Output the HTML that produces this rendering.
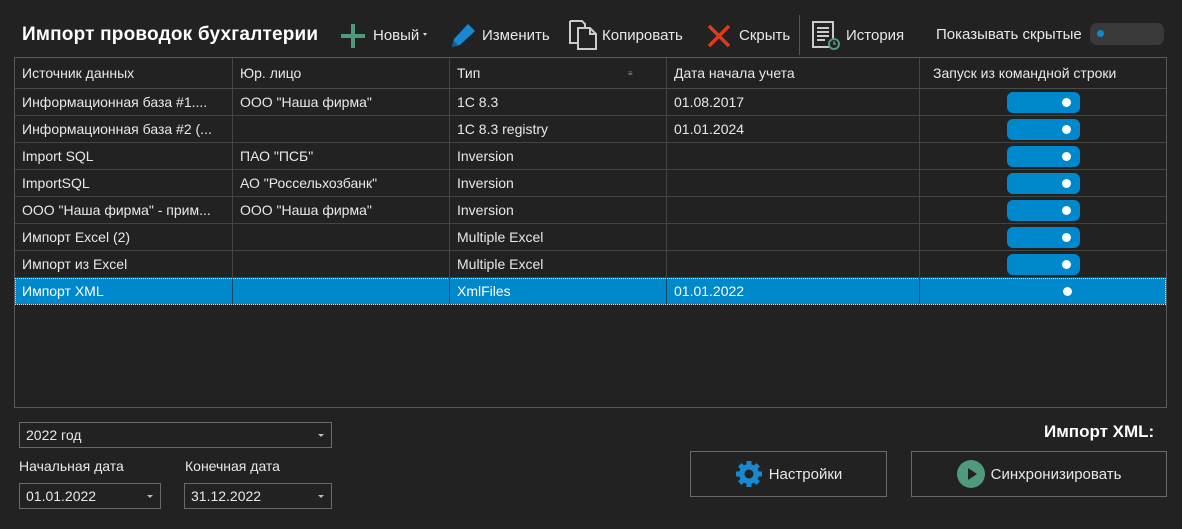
<!DOCTYPE html>
<html><head><meta charset="utf-8"><style>
*{margin:0;padding:0;box-sizing:border-box}
body{width:1182px;height:529px;background:#222;color:#e8e8e8;font-family:"Liberation Sans","DejaVu Sans",sans-serif;font-size:14px;position:relative;overflow:hidden}
.a{position:absolute;white-space:nowrap}
.grid{position:absolute;left:14px;top:57px;width:1153px;height:351px;border:1px solid #5a5a5a}
.row{position:absolute;left:0;width:1151px;height:27px;border-bottom:1px solid #444}
.c{position:absolute;top:0;height:100%;line-height:26px;padding-left:7px;border-right:1px solid #444;overflow:hidden}
.tg{position:absolute;left:992px;top:3px;width:73px;height:21px;border-radius:6px;background:#0088cc}
.tg:after{content:"";position:absolute;right:9px;top:6px;width:9px;height:9px;border-radius:50%;background:#fff}
.box{position:absolute;border:1px solid #6a6a6a;height:26px;line-height:24px;padding-left:6px}
.box:after{content:"";position:absolute;right:7px;top:11px;border:3px solid transparent;border-top:3px solid #bbb}
.btn{position:absolute;border:1px solid #6a6a6a;height:46px;top:451px;display:flex;align-items:center;justify-content:center;gap:6px;font-size:15px}
</style></head><body>
<div class="a" style="left:22px;top:24px;font-size:19px;font-weight:bold;color:#fff;letter-spacing:0.2px">Импорт проводок бухгалтерии</div>
<svg class="a" style="left:340px;top:23px" width="26" height="26"><path d="M13 1v24M1 13h24" stroke="#4f9a7c" stroke-width="4"/></svg>
<div class="a" style="left:373px;top:27px;font-size:15px">Новый</div>
<div class="a" style="left:423px;top:33px;border:2.5px solid transparent;border-top:3px solid #ddd"></div>
<svg class="a" style="left:449px;top:21px" width="28" height="28"><path d="M3 26l2-8L19 3l7 7L11 24z" fill="#1a88d0"/><path d="M3 26l2-6 4 4z" fill="#0d5f99"/></svg>
<div class="a" style="left:482px;top:27px;font-size:15px">Изменить</div>
<svg class="a" style="left:567px;top:19px" width="32" height="32"><path d="M3 2h12l3 3v4M3 2v22h8" fill="none" stroke="#ccc" stroke-width="2"/><path d="M11 9h12l6 6v15H11z M23 9v6h6" fill="none" stroke="#ccc" stroke-width="2"/></svg>
<div class="a" style="left:602px;top:27px;font-size:15px">Копировать</div>
<svg class="a" style="left:706px;top:23px" width="26" height="26"><path d="M3 3l20 20M23 3L3 23" stroke="#e03a1c" stroke-width="3.5"/></svg>
<div class="a" style="left:739px;top:27px;font-size:15px">Скрыть</div>
<div class="a" style="left:799px;top:15px;width:1px;height:40px;background:#555"></div>
<svg class="a" style="left:811px;top:20px" width="30" height="30"><rect x="2" y="2" width="20" height="25" fill="none" stroke="#ccc" stroke-width="2"/><path d="M6 8h12M6 12h12M6 16h12M6 20h8" stroke="#ccc" stroke-width="2"/><circle cx="23" cy="24" r="5" fill="#222" stroke="#4f9a7c" stroke-width="2"/><path d="M23 21v3h2" stroke="#4f9a7c" stroke-width="1.5" fill="none"/></svg>
<div class="a" style="left:846px;top:27px;font-size:15px">История</div>
<div class="a" style="left:936px;top:26px;font-size:15px">Показывать скрытые</div>
<div class="a" style="left:1090px;top:23px;width:74px;height:22px;border-radius:7px;background:#3a3a3a"></div>
<div class="a" style="left:1097px;top:30px;width:7px;height:7px;border-radius:50%;background:#0a88d0"></div>
<div class="grid">
<div class="row" style="top:0;height:31px;border-bottom:1px solid #4a4a4a">
<div class="c" style="left:0;width:218px;line-height:31px">Источник данных</div>
<div class="c" style="left:218px;width:217px;line-height:31px">Юр. лицо</div>
<div class="c" style="left:435px;width:217px;line-height:31px">Тип<span style="position:absolute;left:178px;font-size:8px;color:#999">≡</span></div>
<div class="c" style="left:652px;width:253px;line-height:31px">Дата начала учета</div>
<div class="c" style="left:905px;width:246px;border:0;line-height:31px;padding-left:13px">Запуск из командной строки</div></div>
<div class="row" style="top:31px"><div class="c" style="left:0;width:218px">Информационная база #1....</div><div class="c" style="left:218px;width:217px">ООО "Наша фирма"</div><div class="c" style="left:435px;width:217px">1С 8.3</div><div class="c" style="left:652px;width:253px">01.08.2017</div><div class="tg"></div></div>
<div class="row" style="top:58px"><div class="c" style="left:0;width:218px">Информационная база #2 (...</div><div class="c" style="left:218px;width:217px"></div><div class="c" style="left:435px;width:217px">1С 8.3 registry</div><div class="c" style="left:652px;width:253px">01.01.2024</div><div class="tg"></div></div>
<div class="row" style="top:85px"><div class="c" style="left:0;width:218px">Import SQL</div><div class="c" style="left:218px;width:217px">ПАО "ПСБ"</div><div class="c" style="left:435px;width:217px">Inversion</div><div class="c" style="left:652px;width:253px"></div><div class="tg"></div></div>
<div class="row" style="top:112px"><div class="c" style="left:0;width:218px">ImportSQL</div><div class="c" style="left:218px;width:217px">АО "Россельхозбанк"</div><div class="c" style="left:435px;width:217px">Inversion</div><div class="c" style="left:652px;width:253px"></div><div class="tg"></div></div>
<div class="row" style="top:139px"><div class="c" style="left:0;width:218px">ООО "Наша фирма" - прим...</div><div class="c" style="left:218px;width:217px">ООО "Наша фирма"</div><div class="c" style="left:435px;width:217px">Inversion</div><div class="c" style="left:652px;width:253px"></div><div class="tg"></div></div>
<div class="row" style="top:166px"><div class="c" style="left:0;width:218px">Импорт Excel (2)</div><div class="c" style="left:218px;width:217px"></div><div class="c" style="left:435px;width:217px">Multiple Excel</div><div class="c" style="left:652px;width:253px"></div><div class="tg"></div></div>
<div class="row" style="top:193px"><div class="c" style="left:0;width:218px">Импорт из Excel</div><div class="c" style="left:218px;width:217px"></div><div class="c" style="left:435px;width:217px">Multiple Excel</div><div class="c" style="left:652px;width:253px"></div><div class="tg"></div></div>
<div class="row" style="top:220px;background:#0088cc;outline:1px dotted #cde;outline-offset:-1px;color:#fff"><div class="c" style="left:0;width:218px;border-color:#1a4a66">Импорт XML</div><div class="c" style="left:218px;width:217px;border-color:#1a4a66"></div><div class="c" style="left:435px;width:217px;border-color:#1a4a66">XmlFiles</div><div class="c" style="left:652px;width:253px;border-color:#1a4a66">01.01.2022</div><div style="position:absolute;left:1048px;top:9px;width:9px;height:9px;border-radius:50%;background:#fff"></div></div>
</div>
<div class="box" style="left:19px;top:422px;width:313px">2022 год</div>
<div class="a" style="left:19px;top:458px">Начальная дата</div>
<div class="a" style="left:185px;top:458px">Конечная дата</div>
<div class="box" style="left:19px;top:483px;width:142px">01.01.2022</div>
<div class="box" style="left:184px;top:483px;width:148px">31.12.2022</div>
<div class="a" style="left:1044px;top:422px;font-size:17px;font-weight:bold;color:#fff">Импорт XML:</div>
<div class="btn" style="left:690px;width:197px"><svg width="28" height="28" viewBox="0 0 28 28"><g fill="#1a88d0"><circle cx="14" cy="14" r="10"/><g stroke="#1a88d0" stroke-width="5"><path d="M14 1v26M1 14h26M4.8 4.8l18.4 18.4M23.2 4.8L4.8 23.2"/></g></g><circle cx="14" cy="14" r="4.5" fill="#222"/></svg>Настройки</div>
<div class="btn" style="left:911px;width:256px"><svg width="28" height="28"><circle cx="14" cy="14" r="14" fill="#4f9a7c"/><path d="M11 8v12l9-6z" fill="#222"/></svg>Синхронизировать</div>
</body></html>
